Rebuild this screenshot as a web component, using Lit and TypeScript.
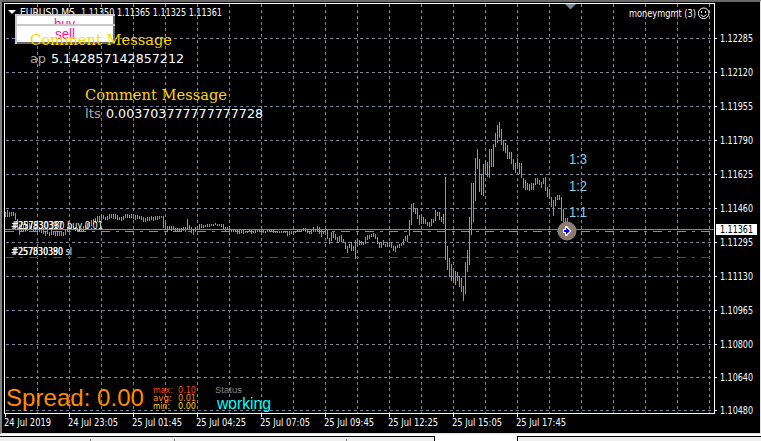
import { LitElement, html, svg, css } from "lit";
import { customElement } from "lit/decorators.js";

/* [top, bottom] of every price bar, in thirds of a pixel below each run's origin */
const RUNS: { x: number; y: number; bars: string }[] = [
  { x: 5, y: 195, bars: "50,65 46,65 50,66 50,62 50,62 54,76 72,102 87,120 85,112 88,110 85,110 80,108 85,105 90,105 92,108 95,112 92,108 95,110 98,115 100,118 108,122 105,118 110,124 106,120 108,120 110,124 108,124 110,124 108,122 110,122 105,120 95,112 90,108 88,102 92,105 95,108 98,110 95,108 98,110 94,108 90,104 85,100 80,95 76,92 72,88 70,84 63,80 62,78 58,76 60,72 66,76 62,74 56,72 58,70 56,72 58,72 60,74 66,76 66,78 62,74 58,70 58,68 60,70 56,70 58,72 60,74 60,72 62,72 64,76 66,80 70,82 66,78 66,78 62,74 66,78 64,74 62,74 62,72 62,70 64,98 80,105 92,112 92,105 94,108 92,106 98,110 100,110 98,108" },
  { x: 181, y: 195, bars: "100,110 96,108 96,112 72,104 90,102 96,113 102,120 95,110 92,104 87,104 87,98 90,99 90,96 87,96 87,96 87,93 87,93 84,90 87,93 87,93 87,96 87,102 96,108 96,105 96,108 102,111 102,110 104,110 105,117 105,117 104,113 105,117 108,114 108,114 104,112 105,117 108,114 105,113 104,110 104,110 104,110 105,113 108,114 105,110 104,111 102,111 102,114 108,114 108,114 108,114 108,114 108,113 108,114 108,123 108,120 108,117 108,117 108,114 104,110 104,110 104,110 99,108 99,110 105,114 108,117 105,117 96,110 102,110 93,108 96,117 105,126 108,117 102,117 102,132 129,147 111,138 111,129 117,135 126,144 123,141 120,141 132,144 141,162 153,174 147,159 141,168 153,168 135,192 132,153 135,150 138,150 141,150 126,147 120,135 120,132" },
  { x: 371, y: 160, bars: "222,231 219,231 222,237 231,252 246,264 246,264 240,255 252,261 246,261 246,258 249,264 258,273 258,276 255,264 252,264 249,258 237,255 228,243 225,246 180,228 132,195 129,156 144,162 144,177 165,195 162,192 171,192 177,192 186,198 186,201 177,198 177,189 150,183 156,168 156,180 171,186 162,192 51,300 258,330 294,351 312,363 327,366 333,375 336,363 348,381 354,396 378,423 306,402 270,336 171,315" },
  { x: 471, y: 100, bars: "249,405 249,366 174,303 147,207 177,276 222,285 192,288 180,219 186,231 147,234 147,201 132,201 99,141 75,129 66,114 87,135 120,153 129,159 135,177 156,177 156,192 177,210 189,219 174,207 189,222 189,234 234,264 240,270 249,270 252,273 249,270 249,270 234,255 234,252 240,255 246,264 234,252 231,273 261,291 267,294 291,321 300,348 291,318 285,300 285,300 291,363 327,366 354,390 354,400" },
];

const BAR_PATH = RUNS.map((r) =>
  r.bars.split(" ").map((b, i) => {
    const [t, e] = b.split(",").map((v) => r.y + Math.round(Number(v) / 3));
    return `M${r.x + i * 2 + 0.5} ${t}V${e}`;
  }).join("")
).join("");

const GRID_X = Array.from({ length: 22 }, (_, i) => 37 + i * 32);
const PRICES: [string, number][] = [
  ["1.12285", 38], ["1.12120", 72], ["1.11955", 106], ["1.11790", 140],
  ["1.11625", 174], ["1.11460", 208], ["1.11295", 242], ["1.11130", 276],
  ["1.10965", 310], ["1.10800", 344], ["1.10640", 377], ["1.10480", 410],
];
const TIMES = ["24 Jul 2019", "24 Jul 23:05", "25 Jul 01:45", "25 Jul 04:25", "25 Jul 07:05",
  "25 Jul 09:45", "25 Jul 12:25", "25 Jul 15:05", "25 Jul 17:45"];

const label = (x: number, y: number, width: number, cls: string, text: string) =>
  svg`<text x=${x} y=${y} textLength=${width} lengthAdjust="spacingAndGlyphs" class=${cls}>${text}</text>`;

@customElement("price-plot")
export class PricePlot extends LitElement {
  static styles = css`
    :host { display: block; }
    svg { display: block; }
    .ui { font: 11px "DejaVu Sans Condensed", "DejaVu Sans", sans-serif; fill: #fff; }
    .order { font: 10px "DejaVu Sans Condensed", "DejaVu Sans", sans-serif; fill: #fff; }
    .btn { font: 14px "Liberation Sans", sans-serif; fill: #ff1493; }
    .comment { font: 15.5px "DejaVu Serif", serif; fill: #ffd700; }
    .name { font: 13px "DejaVu Sans", sans-serif; fill: #a9a9a9; }
    .value { font: 13px "DejaVu Sans", sans-serif; fill: #fff; }
    .ratio { font: 14px "Liberation Sans", sans-serif; fill: #87ceeb; }
    .spread { font: 24px "Liberation Sans", sans-serif; fill: #ff8c00; }
    .small { font: 8.5px "DejaVu Sans", sans-serif; }
    .max { fill: #ff4500; }
    .avg { fill: #ff8c00; }
    .min { fill: #ffd700; }
    .status { font: 9.5px "Liberation Sans", sans-serif; fill: #808080; }
    .working { font: 16px "Liberation Sans", sans-serif; fill: #00ffff; }
  `;
  render() {
    return html`<svg width="713" height="412" viewBox="2 2 713 412">
      <g stroke="#778899" stroke-dasharray="3 3" shape-rendering="crispEdges">
        ${GRID_X.map((x) => svg`<path d="M${x + 0.5} 4V413" />`)}
        ${PRICES.map(([, y]) => svg`<path d="M6 ${y + 0.5}H714" />`)}
      </g>
      <g fill="none" shape-rendering="crispEdges">
        <path d="M5 231.5H714" stroke="#32cd32" stroke-dasharray="9 6 3 6" />
        <path d="M5 257.5H714" stroke="#f00" stroke-dasharray="9 6 3 6" />
        <path d="M5 229.5H714" stroke="#778899" />
        <path d=${BAR_PATH} stroke="#00ff00" />
        <path d="M4.5 414V3.5H714.5V413.5H4" stroke="#fff" />
      </g>
      <path d="M565 4H576L570.5 9.5Z" fill="#778899" />
      <path d="M8 10H16L12 14Z" fill="#fff" />
      ${label(20, 16, 55, "ui", "EURUSD,M5")}
      ${label(81, 16, 141, "ui", "1.11350 1.11365 1.11325 1.11361")}
      <g shape-rendering="crispEdges">
        <rect x="15" y="14" width="100" height="30" fill="#c8c8c8" />
        <path d="M113 16H115V44H17V42H113Z" fill="#696969" />
        <rect x="15" y="24" width="100" height="2" fill="#c8c8c8" />
        <rect x="17" y="16" width="96" height="8" fill="#fff" />
        <rect x="17" y="26" width="96" height="16" fill="#fff" />
      </g>
      <svg x="17" y="16" width="96" height="8" viewBox="17 16 96 8">${label(54, 29, 21, "btn", "buy")}</svg>
      ${label(55, 39, 20, "btn", "sell")}
      ${label(30, 45, 142, "comment", "Comment Message")}
      ${label(30, 63, 16, "name", "ap")}
      ${label(51, 63, 133, "value", "5.142857142857212")}
      ${label(85, 100, 142, "comment", "Comment Message")}
      ${label(85, 118, 16, "name", "lts")}
      ${label(106, 118, 157, "value", "0.003703777777777728")}
      ${label(629, 17, 67, "ui", "moneymgmt (3)")}
      <g fill="none" stroke="#fff">
        <circle cx="703.7" cy="13.3" r="5.3" />
        <path d="M701.5 11V13M705.5 11V13M700.8 14.5Q703.5 18.5 706.4 14.5" />
      </g>
      ${label(11, 229, 92, "order", "#257830380 buy 0.01")}
      ${label(12, 229, 51, "order", "#257930397")}
      ${label(11, 255, 61, "order", "#257830380 sl")}
      ${label(12, 255, 51, "order", "#257830390")}
      ${label(569, 164, 18, "ratio", "1:3")}
      ${label(569, 191, 18, "ratio", "1:2")}
      ${label(569, 217, 18, "ratio", "1:1")}
      <circle cx="567" cy="231" r="9" fill="#8f7b6e" stroke="#8c8c8c" />
      <path d="M563 229H565V226H567L571.5 231L567 236H565V233H563Z" fill="#fff" />
      <path d="M564 230H566V227.5L570 231L566 234.5V232H564Z" fill="#00f" />
      ${label(6, 406, 138, "spread", "Spread: 0.00")}
      ${label(153, 393, 20, "small max", "max:")}${label(178, 393, 18, "small max", "0.10")}
      ${label(153, 401, 19, "small avg", "avg:")}${label(178, 401, 18, "small avg", "0.01")}
      ${label(153, 409, 17, "small min", "min:")}${label(178, 409, 18, "small min", "0.00")}
      ${label(215, 393, 27, "status", "Status")}
      ${label(217, 409, 54, "working", "working")}
    </svg>`;
  }
}

@customElement("price-axis")
export class PriceAxis extends LitElement {
  static styles = css`
    :host { display: block; }
    svg { display: block; overflow: visible; }
    text { font: 11px "DejaVu Sans Condensed", "DejaVu Sans", sans-serif; fill: #fff; }
    .current { fill: #000; }
  `;
  render() {
    return html`<svg width="45" height="412" viewBox="715 2 45 412">
      <g shape-rendering="crispEdges" stroke="#fff">
        ${PRICES.map(([, y]) => svg`<path d="M715 ${y + 0.5}H717" />`)}
      </g>
      ${PRICES.map(([p, y]) => label(720, y + 4, 33, "", p))}
      <rect x="716" y="224" width="41" height="11" fill="#fff" />
      ${label(720, 233, 33, "current", "1.11361")}
    </svg>`;
  }
}

@customElement("time-axis")
export class TimeAxis extends LitElement {
  static styles = css`
    :host { display: block; }
    svg { display: block; }
    text { font: 11px "DejaVu Sans Condensed", "DejaVu Sans", sans-serif; fill: #fff; }
  `;
  render() {
    return html`<svg width="758" height="19" viewBox="2 414 758 19">
      ${TIMES.map((t, i) => {
        const x = 5 + i * 64;
        return svg`<rect x=${x} y="414" width="1" height="3" fill="#fff" />
          ${label(x - 1, 426, i === 0 ? 47 : 50, "", t)}`;
      })}
    </svg>`;
  }
}

@customElement("app-root")
export class AppRoot extends LitElement {
  static styles = css`
    :host { display: block; width: 761px; height: 441px; overflow: hidden; background: #f0f0f0; }
    .window {
      display: grid; grid-template-columns: 713px 45px; grid-template-rows: 412px 19px;
      box-sizing: border-box; width: 761px; height: 434px; background: #000;
      border-style: solid; border-width: 2px 1px 1px 2px;
      border-color: #696969 #e3e3e3 #e3e3e3 #808080;
    }
    .time { grid-column: 1 / -1; }
    .tabs { display: flex; height: 7px; padding-top: 2px; box-sizing: border-box; background: #fff; }
    .tab { box-sizing: border-box; border-top: 1px solid #000; background: #f0f0f0; }
    .left { display: flex; align-items: flex-end; width: 435px; border-right: 1px solid #000; }
    .sep { width: 1px; height: 2px; background: #808080; }
    .sep:nth-child(1) { margin-left: 90px; }
    .sep:nth-child(2) { margin-left: 83px; }
    .sep:nth-child(3) { margin-left: 171px; }
    .active { width: 82px; background: #fff; }
    .right { flex: 1; border-left: 1px solid #000; }
  `;
  render() {
    return html`
      <div class="window">
        <price-plot></price-plot>
        <price-axis></price-axis>
        <time-axis class="time"></time-axis>
      </div>
      <div class="tabs">
        <div class="tab left"><i class="sep"></i><i class="sep"></i><i class="sep"></i></div>
        <div class="active"></div>
        <div class="tab right"></div>
      </div>
    `;
  }
}
